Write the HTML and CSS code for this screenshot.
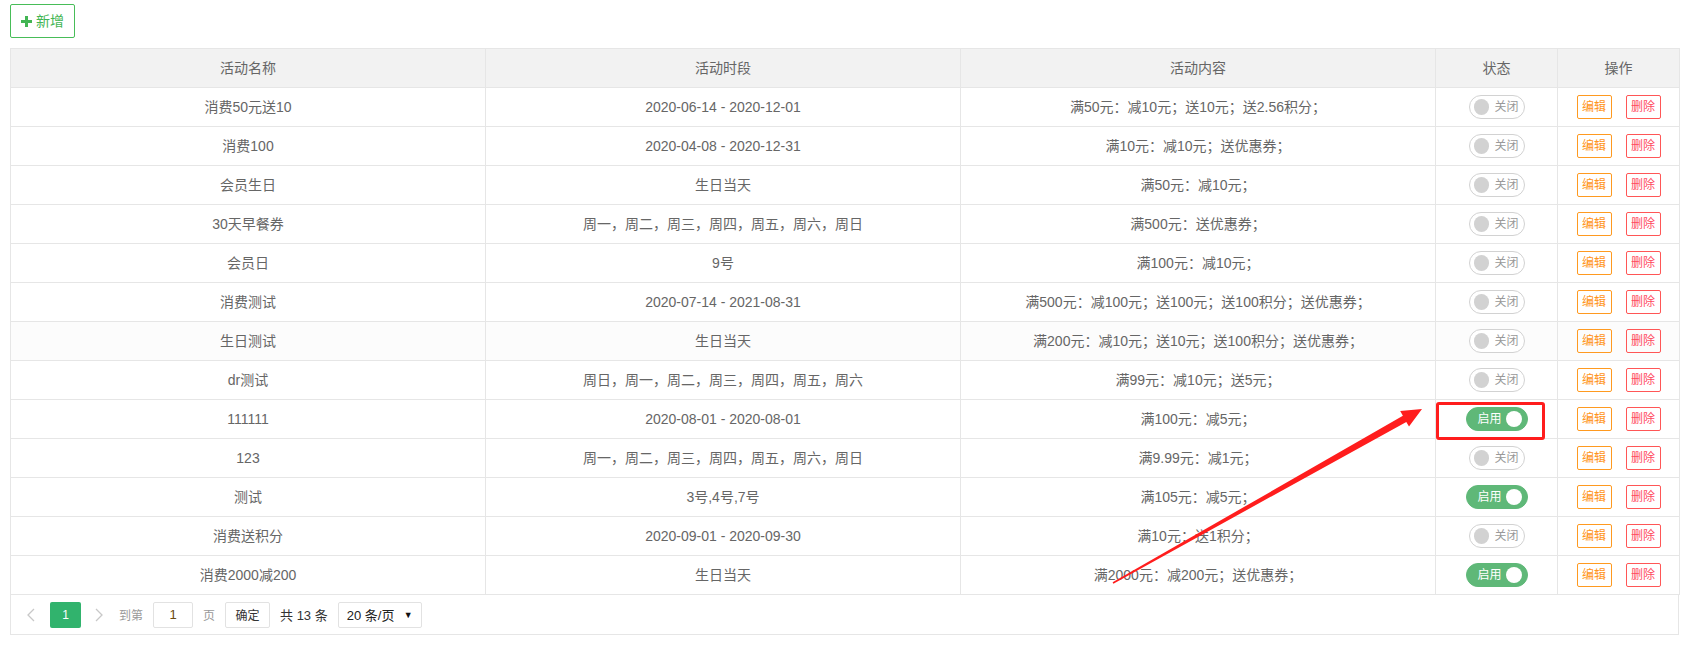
FILE: index.html
```html
<!doctype html>
<html lang="zh-CN">

    <head>
        <meta charset="UTF-8" />
        <title>活动管理</title>
        <link rel="stylesheet" href="styles.css">
    </head>

    <body>
        <div class="toolbar">
            <a href="#" class="btn-add">
                <svg width="11" height="11" viewBox="0 0 11 11"><rect x="4" y="0" width="3" height="11" fill="#42b553"/><rect x="0" y="4" width="11" height="3" fill="#42b553"/></svg>
                <span>新增</span>
            </a>
        </div>
        <div class="wrap">
            <table class="list">
                <colgroup>
                    <col class="c-wide" />
                    <col class="c-wide" />
                    <col class="c-wide" />
                    <col class="c-narrow" />
                    <col class="c-narrow" />
                </colgroup>
                <thead>
                    <tr>
                        <th>活动名称</th>
                        <th>活动时段</th>
                        <th>活动内容</th>
                        <th>状态</th>
                        <th>操作</th>
                    </tr>
                </thead>
                <tbody>
                    <tr>
                        <td>消费50元送10</td>
                        <td>2020-06-14 - 2020-12-01</td>
                        <td>满50元：减10元；送10元；送2.56积分；</td>
                        <td><span class="switch"><i></i><em>关闭</em></span></td>
                        <td><span class="op"><a href="#" class="edit">编辑</a><a href="#" class="del">删除</a></span></td>
                    </tr>
                    <tr>
                        <td>消费100</td>
                        <td>2020-04-08 - 2020-12-31</td>
                        <td>满10元：减10元；送优惠券；</td>
                        <td><span class="switch"><i></i><em>关闭</em></span></td>
                        <td><span class="op"><a href="#" class="edit">编辑</a><a href="#" class="del">删除</a></span></td>
                    </tr>
                    <tr>
                        <td>会员生日</td>
                        <td>生日当天</td>
                        <td>满50元：减10元；</td>
                        <td><span class="switch"><i></i><em>关闭</em></span></td>
                        <td><span class="op"><a href="#" class="edit">编辑</a><a href="#" class="del">删除</a></span></td>
                    </tr>
                    <tr>
                        <td>30天早餐券</td>
                        <td>周一，周二，周三，周四，周五，周六，周日</td>
                        <td>满500元：送优惠券；</td>
                        <td><span class="switch"><i></i><em>关闭</em></span></td>
                        <td><span class="op"><a href="#" class="edit">编辑</a><a href="#" class="del">删除</a></span></td>
                    </tr>
                    <tr>
                        <td>会员日</td>
                        <td>9号</td>
                        <td>满100元：减10元；</td>
                        <td><span class="switch"><i></i><em>关闭</em></span></td>
                        <td><span class="op"><a href="#" class="edit">编辑</a><a href="#" class="del">删除</a></span></td>
                    </tr>
                    <tr>
                        <td>消费测试</td>
                        <td>2020-07-14 - 2021-08-31</td>
                        <td>满500元：减100元；送100元；送100积分；送优惠券；</td>
                        <td><span class="switch"><i></i><em>关闭</em></span></td>
                        <td><span class="op"><a href="#" class="edit">编辑</a><a href="#" class="del">删除</a></span></td>
                    </tr>
                    <tr class="hover">
                        <td>生日测试</td>
                        <td>生日当天</td>
                        <td>满200元：减10元；送10元；送100积分；送优惠券；</td>
                        <td><span class="switch"><i></i><em>关闭</em></span></td>
                        <td><span class="op"><a href="#" class="edit">编辑</a><a href="#" class="del">删除</a></span></td>
                    </tr>
                    <tr>
                        <td>dr测试</td>
                        <td>周日，周一，周二，周三，周四，周五，周六</td>
                        <td>满99元：减10元；送5元；</td>
                        <td><span class="switch"><i></i><em>关闭</em></span></td>
                        <td><span class="op"><a href="#" class="edit">编辑</a><a href="#" class="del">删除</a></span></td>
                    </tr>
                    <tr>
                        <td>111111</td>
                        <td>2020-08-01 - 2020-08-01</td>
                        <td>满100元：减5元；</td>
                        <td><span class="switch on"><em>启用</em><i></i></span></td>
                        <td><span class="op"><a href="#" class="edit">编辑</a><a href="#" class="del">删除</a></span></td>
                    </tr>
                    <tr>
                        <td>123</td>
                        <td>周一，周二，周三，周四，周五，周六，周日</td>
                        <td>满9.99元：减1元；</td>
                        <td><span class="switch"><i></i><em>关闭</em></span></td>
                        <td><span class="op"><a href="#" class="edit">编辑</a><a href="#" class="del">删除</a></span></td>
                    </tr>
                    <tr>
                        <td>测试</td>
                        <td>3号,4号,7号</td>
                        <td>满105元：减5元；</td>
                        <td><span class="switch on"><em>启用</em><i></i></span></td>
                        <td><span class="op"><a href="#" class="edit">编辑</a><a href="#" class="del">删除</a></span></td>
                    </tr>
                    <tr>
                        <td>消费送积分</td>
                        <td>2020-09-01 - 2020-09-30</td>
                        <td>满10元：送1积分；</td>
                        <td><span class="switch"><i></i><em>关闭</em></span></td>
                        <td><span class="op"><a href="#" class="edit">编辑</a><a href="#" class="del">删除</a></span></td>
                    </tr>
                    <tr>
                        <td>消费2000减200</td>
                        <td>生日当天</td>
                        <td>满2000元：减200元；送优惠券；</td>
                        <td><span class="switch on"><em>启用</em><i></i></span></td>
                        <td><span class="op"><a href="#" class="edit">编辑</a><a href="#" class="del">删除</a></span></td>
                    </tr>
                </tbody>
            </table>
            <div class="page">
                <span class="prev"><svg width="8" height="14" viewBox="0 0 8 14"><polyline points="7,1 1,7 7,13" fill="none" stroke="#c8c8c8" stroke-width="1.3"/></svg></span>
                <span class="curr">1</span>
                <span class="next"><svg width="8" height="14" viewBox="0 0 8 14"><polyline points="1,1 7,7 1,13" fill="none" stroke="#c8c8c8" stroke-width="1.3"/></svg></span>
                <span class="skip">到第</span>
                <input class="jump" type="text" value="1" />
                <span class="skip page-unit">页</span>
                <button class="ok">确定</button>
                <span class="count">共 13 条</span>
                <span class="limit"><span>20 条/页</span><b>▼</b></span>
            </div>
        </div>

        <!-- 标注 -->
        <div class="mark"></div>
        <svg class="arrow" width="1687" height="647" viewBox="0 0 1687 647">
            <polygon points="1112.6,582.3 1402.9,415.8 1400.2,411 1422,409 1409,426.6 1406.3,421.9 1113.4,583.7" fill="#ff1d1d"/>
        </svg>
    </body>

</html>
```

FILE: styles.css
```css
* {
    padding: 0px;
    margin: 0px;
    box-sizing: border-box;
}

html,
body {
    font-size: 14px;
    font-family: "Liberation Sans", "Noto Sans CJK SC", sans-serif;
    color: #666;
    background: #fff;
    width: 100%;
    height: 100%;
}

body {
    position: relative;
    padding-top: 4px;
}

a {
    text-decoration: none;
}

.toolbar {
    padding-left: 10px;
    height: 44px;
}

.btn-add {
    display: inline-flex;
    align-items: center;
    width: 65px;
    height: 34px;
    padding-left: 10px;
    border: 1px solid #47bd58;
    border-radius: 2px;
    color: #42b553;
    font-size: 14px;
    line-height: 20px;
}

.btn-add svg {
    margin-right: 4px;
}

.wrap {
    margin: 0 8px 0 10px;
}

.list {
    width: 100%;
    table-layout: fixed;
    border-collapse: collapse;
}

.list col.c-wide {
    width: 475px;
}

.list col.c-narrow {
    width: 122px;
}

.list th,
.list td {
    height: 39px;
    padding: 0 15px;
    border: 1px solid #e6e6e6;
    text-align: center;
    vertical-align: middle;
    font-weight: normal;
    line-height: 20px;
    white-space: nowrap;
}

.list th {
    background: #f2f2f2;
    color: #666;
}

.list tr.hover td {
    background: #fcfcfc;
}

.switch {
    display: inline-flex;
    align-items: center;
    width: 56px;
    height: 24px;
    padding: 0 5px 0 4px;
    border: 1px solid #d2d2d2;
    border-radius: 12px;
    background: #fff;
    vertical-align: middle;
}

.switch i {
    display: block;
    width: 16px;
    height: 16px;
    border-radius: 50%;
    background: #d2d2d2;
}

.switch em {
    font-style: normal;
    font-size: 12px;
    line-height: 16px;
    color: #999;
    margin-left: 5px;
}

.switch.on {
    width: 62px;
    padding: 0 5px 0 11px;
    border-color: #5fb878;
    background: #5fb878;
}

.switch.on i {
    background: #fff;
    margin-left: 4px;
}

.switch.on em {
    color: #fff;
    margin-left: 0;
}

.op {
    display: inline-flex;
    gap: 14px;
    vertical-align: middle;
}

.op a {
    display: block;
    width: 35px;
    height: 24px;
    line-height: 22px;
    font-size: 12px;
    border: 1px solid;
    border-radius: 2px;
    text-align: center;
}

.op a.edit {
    color: #ff9420;
    border-color: #ff9a20;
}

.op a.del {
    color: #ff4a60;
    border-color: #ff5656;
}

.page {
    display: flex;
    align-items: center;
    height: 40px;
    border: 1px solid #e6e6e6;
    border-top: none;
    font-size: 12px;
}

.page .prev,
.page .next {
    display: flex;
    align-items: center;
    justify-content: center;
    width: 22px;
    height: 26px;
}

.page .prev {
    margin-left: 9px;
}

.page .curr {
    margin-left: 8px;
    width: 31px;
    height: 26px;
    line-height: 26px;
    text-align: center;
    color: #fff;
    background: #31b36d;
    border-radius: 2px;
}

.page .next {
    margin-left: 7px;
}

.page .skip {
    margin-left: 9px;
    color: #999;
}

.page .jump {
    margin-left: 10px;
    width: 40px;
    height: 26px;
    border: 1px solid #e2e2e2;
    border-radius: 2px;
    text-align: center;
    font-family: "Liberation Sans", "Noto Sans CJK SC", sans-serif;
    font-size: 13px;
    color: #6b4a10;
    outline: none;
}

.page .page-unit {
    margin-left: 10px;
}

.page .ok {
    margin-left: 10px;
    width: 45px;
    height: 26px;
    border: 1px solid #e2e2e2;
    border-radius: 2px;
    background: #fff;
    font-family: "Liberation Sans", "Noto Sans CJK SC", sans-serif;
    font-size: 12px;
    color: #333;
}

.page .count {
    margin-left: 10px;
    font-size: 13px;
    color: #333;
}

.page .limit {
    display: flex;
    align-items: center;
    justify-content: space-between;
    margin-left: 10px;
    width: 84px;
    height: 26px;
    padding: 0 8px 0 8px;
    border: 1px solid #e2e2e2;
    border-radius: 2px;
    font-size: 13px;
    color: #222;
}

.page .limit b {
    font-weight: normal;
    font-size: 9px;
    color: #111;
}

.mark {
    position: absolute;
    left: 1436px;
    top: 402px;
    width: 109px;
    height: 38px;
    border: 3px solid #ff1d1d;
    border-radius: 3px;
}

.arrow {
    position: absolute;
    left: 0px;
    top: 0px;
    pointer-events: none;
}
```
